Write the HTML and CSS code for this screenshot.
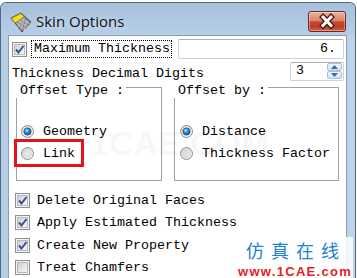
FILE: index.html
```html
<!DOCTYPE html>
<html>
<head>
<meta charset="utf-8">
<link rel="stylesheet" href="styles.css">
</head>
<body>
<div class="window">
  <div class="titlebar">
    <svg class="app-icon" width="22" height="21" viewBox="0 0 22 21">
      <polygon points="1,6 11,1 21,10 12,20" fill="#8d8d8d" stroke="#4d4d4d" stroke-width="1"/>
      <polygon points="1.5,6.2 10.8,1.6 14,4.6 5,11" fill="#f2e21a" stroke="#8a7a10" stroke-width="0.6"/>
      <path d="M8 8.5 L17.5 14.5 M10.5 6.5 L19.5 11.5 M6.5 11 L15 17.5 M11 8 L8 15 M14 6 L11 16.5 M17 8.5 L14 18.5" stroke="#c8c8c8" stroke-width="0.9" fill="none"/>
    </svg>
    <span class="title">Skin Options</span>
    <div class="close">
      <svg width="36" height="19" viewBox="0 0 36 19">
        <path d="M14 5 L22 13.5 M22 5 L14 13.5" stroke="#4a1a10" stroke-width="5.5" stroke-linecap="square" fill="none"/>
        <path d="M14 5 L22 13.5 M22 5 L14 13.5" stroke="#ffffff" stroke-width="3" stroke-linecap="square" fill="none"/>
      </svg>
    </div>
  </div>
  <div class="frame">
    <div class="client">
      <div class="row row-max">
        <span class="cb"><i></i><svg class="tick" width="13" height="13" viewBox="0 0 13 13"><path d="M3 6.5 L5.5 9.5 L10.5 3" stroke="#3a4f92" stroke-width="2" fill="none"/></svg></span>
        <span class="focus">Maximum Thickness</span>
        <div class="textbox">6.</div>
      </div>
      <div class="row row-digits">
        <span class="lbl">Thickness Decimal Digits</span>
        <div class="spin">
          <span class="spin-val">3</span>
          <div class="spin-btns">
            <span class="sbtn"><svg width="7" height="4" viewBox="0 0 7 4"><polygon points="0,4 3.5,0 7,4" fill="#3e6aa8"/></svg></span>
            <span class="sbtn"><svg width="7" height="4" viewBox="0 0 7 4"><polygon points="0,0 3.5,4 7,0" fill="#3e6aa8"/></svg></span>
          </div>
        </div>
      </div>
      <div class="groups">
        <div class="group g-type">
          <span class="legend">Offset Type :</span>
          <div class="opt">
            <svg class="radio" width="13" height="13" viewBox="0 0 13 13">
              <defs>
                <linearGradient id="rb1" x1="0" y1="0" x2="1" y2="1"><stop offset="0" stop-color="#d6d6d6"/><stop offset="1" stop-color="#f8f8f8"/></linearGradient>
                <radialGradient id="rd1" cx="0.4" cy="0.35" r="0.7"><stop offset="0" stop-color="#b9ecff"/><stop offset="0.45" stop-color="#2b8fd8"/><stop offset="1" stop-color="#0c4a8c"/></radialGradient>
              </defs>
              <circle cx="6.5" cy="6.5" r="6" fill="url(#rb1)" stroke="#8e8f8f"/>
              <circle cx="6.5" cy="6.5" r="3.6" fill="url(#rd1)" stroke="#1d4f86" stroke-width="0.8"/>
            </svg>
            <span>Geometry</span>
          </div>
          <div class="opt link">
            <svg class="radio" width="13" height="13" viewBox="0 0 13 13">
              <defs>
                <linearGradient id="rb2" x1="0" y1="0" x2="1" y2="1"><stop offset="0" stop-color="#d2d2d2"/><stop offset="1" stop-color="#f8f8f8"/></linearGradient>
              </defs>
              <circle cx="6.5" cy="6.5" r="6" fill="url(#rb2)" stroke="#8e8f8f"/>
              <circle cx="6.5" cy="6.5" r="3.8" fill="#e6e6e6" stroke="#d0d0d0" stroke-width="0.8"/>
            </svg>
            <span>Link</span>
            <span class="annot"></span>
          </div>
        </div>
        <div class="group g-by">
          <span class="legend">Offset by :</span>
          <div class="opt">
            <svg class="radio" width="13" height="13" viewBox="0 0 13 13">
              <defs>
                <linearGradient id="rb3" x1="0" y1="0" x2="1" y2="1"><stop offset="0" stop-color="#d6d6d6"/><stop offset="1" stop-color="#f8f8f8"/></linearGradient>
                <radialGradient id="rd3" cx="0.4" cy="0.35" r="0.7"><stop offset="0" stop-color="#b9ecff"/><stop offset="0.45" stop-color="#2b8fd8"/><stop offset="1" stop-color="#0c4a8c"/></radialGradient>
              </defs>
              <circle cx="6.5" cy="6.5" r="6" fill="url(#rb3)" stroke="#8e8f8f"/>
              <circle cx="6.5" cy="6.5" r="3.6" fill="url(#rd3)" stroke="#1d4f86" stroke-width="0.8"/>
            </svg>
            <span>Distance</span>
          </div>
          <div class="opt">
            <svg class="radio" width="13" height="13" viewBox="0 0 13 13">
              <defs>
                <linearGradient id="rb4" x1="0" y1="0" x2="1" y2="1"><stop offset="0" stop-color="#d2d2d2"/><stop offset="1" stop-color="#f8f8f8"/></linearGradient>
              </defs>
              <circle cx="6.5" cy="6.5" r="6" fill="url(#rb4)" stroke="#8e8f8f"/>
              <circle cx="6.5" cy="6.5" r="3.8" fill="#e6e6e6" stroke="#d0d0d0" stroke-width="0.8"/>
            </svg>
            <span>Thickness Factor</span>
          </div>
        </div>
      </div>
      <div class="checks">
        <div class="crow"><span class="cb"><i></i><svg class="tick" width="13" height="13" viewBox="0 0 13 13"><path d="M3 6.5 L5.5 9.5 L10.5 3" stroke="#3a4f92" stroke-width="2" fill="none"/></svg></span><span>Delete Original Faces</span></div>
        <div class="crow"><span class="cb"><i></i><svg class="tick" width="13" height="13" viewBox="0 0 13 13"><path d="M3 6.5 L5.5 9.5 L10.5 3" stroke="#3a4f92" stroke-width="2" fill="none"/></svg></span><span>Apply Estimated Thickness</span></div>
        <div class="crow"><span class="cb"><i></i><svg class="tick" width="13" height="13" viewBox="0 0 13 13"><path d="M3 6.5 L5.5 9.5 L10.5 3" stroke="#3a4f92" stroke-width="2" fill="none"/></svg></span><span>Create New Property</span></div>
        <div class="crow"><span class="cb"><i></i></span><span>Treat Chamfers</span></div>
      </div>
    </div>
  </div>
  <div class="wm-center">1CAE.COM</div>
  <div class="wm-box">
    <div class="wm-cn">仿真在线</div>
    <div class="wm-url">www.1CAE.com</div>
  </div>
</div>
</body>
</html>
```

FILE: styles.css
```css
html, body {
  margin: 0;
  padding: 0;
}
body {
  width: 357px;
  height: 278px;
  overflow: hidden;
  background: #ffffff;
  font-family: "Liberation Mono", "DejaVu Sans Mono", monospace;
  font-size: 13.33px;
  color: #000;
}
.window {
  position: relative;
  margin-top: 2px;
  width: 356px;
  height: 276px;
  box-sizing: border-box;
  border: 1px solid #56687e;
  border-bottom: none;
  border-radius: 6px 6px 0 0;
  background: linear-gradient(90deg, #b4cce6 0%, #bcd3ec 100%);
  display: flex;
  flex-direction: column;
  overflow: hidden;
}
.titlebar {
  height: 32px;
  flex: none;
  display: flex;
  align-items: flex-start;
  padding: 0 9px 0 9px;
  background: linear-gradient(#a6c0dc, #b6cee8);
  border-radius: 5px 5px 0 0;
}
.app-icon {
  margin-top: 9px;
  flex: none;
}
.title {
  margin-left: 4px;
  margin-top: 8px;
  font-family: "Open Sans", "Noto Sans", sans-serif;
  font-size: 15px;
  line-height: 20px;
  color: #111;
  text-shadow: 0 0 6px rgba(255,255,255,0.7);
}
.close {
  margin-left: auto;
  margin-top: 8px;
  width: 38px;
  height: 21px;
  box-sizing: border-box;
  border: 1px solid #6a2a1e;
  border-radius: 3px;
  background: linear-gradient(#eab0a2 0%, #dc8470 45%, #c64a2e 52%, #bd3d22 78%, #d26446 100%);
  box-shadow: inset 0 0 0 1px rgba(255,255,255,0.35);
}
.close svg { display: block; }
.frame {
  flex: 1;
  display: flex;
  padding: 0 8px 0 7px;
  min-height: 0;
}
.client {
  flex: 1;
  background: #ffffff;
  border: 1px solid #8b9db3;
  border-bottom: none;
  display: flex;
  flex-direction: column;
  overflow: hidden;
}
.row {
  display: flex;
  height: 22px;
  flex: none;
  padding: 0 2px 0 3px;
}
.row-max {
  margin-top: 2px;
  align-items: center;
}
.cb {
  width: 15px;
  height: 15px;
  box-sizing: border-box;
  border: 1px solid #8e8f8f;
  background: #f4f4f4;
  display: grid;
  place-items: center;
  flex: none;
}
.cb > * { grid-area: 1 / 1; }
.cb i {
  display: block;
  width: 9px;
  height: 9px;
  border: 1px solid #b6b9bd;
  background: linear-gradient(135deg, #cdd0d4, #f7f7f7);
}
.tick { display: block; }
.focus {
  margin-left: 4px;
  width: 141px;
  height: 18px;
  box-sizing: border-box;
  border: 1px dotted #000;
  padding-left: 2px;
  line-height: 16px;
}
.textbox {
  margin-left: auto;
  width: 166px;
  height: 20px;
  box-sizing: border-box;
  border: 1px solid #cdd1d7;
  border-top-color: #abadb3;
  border-radius: 2px;
  text-align: right;
  padding-right: 7px;
  line-height: 18px;
}
.row-digits {
  align-items: flex-start;
}
.lbl {
  margin-top: 6px;
  line-height: 15px;
}
.spin {
  margin-left: auto;
  margin-top: 2px;
  width: 54px;
  height: 19px;
  box-sizing: border-box;
  border: 1px solid #cdd1d7;
  border-top-color: #abadb3;
  border-radius: 2px;
  display: flex;
}
.spin-val {
  padding-left: 5px;
  line-height: 15px;
}
.spin-btns {
  margin-left: auto;
  margin-right: 1px;
  display: flex;
  flex-direction: column;
  width: 15px;
}
.sbtn {
  height: 8px;
  box-sizing: border-box;
  border: 1px solid #a9c1de;
  border-radius: 2px;
  background: linear-gradient(#eef5fc, #cfe1f5);
  display: grid;
  place-items: center;
}
.sbtn svg { display: block; }
.groups {
  margin-top: 5px;
  padding-left: 7px;
  display: flex;
  gap: 12px;
  flex: none;
}
.group {
  position: relative;
  height: 94px;
  box-sizing: border-box;
  border: 1px solid #a0a0a0;
  padding-top: 32px;
}
.g-type {
  width: 146px;
  padding-left: 4px;
}
.g-by {
  width: 165px;
  padding-left: 5px;
}
.legend {
  position: absolute;
  left: -1px;
  top: -4px;
  background: #fff;
  padding: 0 2px 0 4px;
  line-height: 14px;
}
.opt {
  display: flex;
  align-items: center;
  gap: 9px;
  height: 22px;
}
.radio {
  display: block;
  flex: none;
}
.link {
  position: relative;
}
.annot {
  position: absolute;
  left: -7px;
  top: -3px;
  width: 70px;
  height: 28px;
  box-sizing: border-box;
  border: 3px solid #e5121c;
}
.checks {
  margin-top: 8px;
  padding-left: 6px;
  display: flex;
  flex-direction: column;
  flex: none;
}
.crow {
  height: 22.5px;
  display: flex;
  align-items: center;
  gap: 7px;
}
.wm-center {
  position: absolute;
  left: 89px;
  top: 123px;
  font-family: "Liberation Sans", sans-serif;
  font-weight: bold;
  font-size: 34px;
  line-height: 34px;
  color: rgba(0,0,0,0.045);
  pointer-events: none;
}
.wm-box {
  position: absolute;
  left: 235px;
  top: 234px;
  width: 117px;
  height: 42px;
  background: rgba(255,255,255,0.85);
  padding-top: 3px;
  box-sizing: border-box;
}
.wm-cn {
  margin-left: 10px;
  font-family: "Noto Sans CJK SC", sans-serif;
  font-size: 18px;
  line-height: 20px;
  letter-spacing: 7px;
  color: #1e80d8;
}
.wm-url {
  margin-left: 2px;
  margin-top: 5px;
  font-family: "Liberation Sans", sans-serif;
  font-weight: bold;
  font-size: 13px;
  line-height: 13px;
  letter-spacing: 1.3px;
  color: #e3221b;
  text-shadow: 0 0 2px #fff;
}
```
